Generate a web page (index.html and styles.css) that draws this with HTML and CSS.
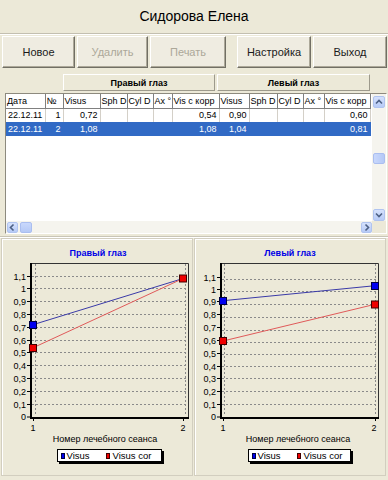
FILE: index.html
```html
<!DOCTYPE html>
<html>
<head>
<meta charset="utf-8">
<link rel="stylesheet" href="styles.css">
</head>
<body>
<div class="title">Сидорова Елена</div>
<div class="toolbar">
  <div class="btn w73">Новое</div>
  <div class="btn w71 dis">Удалить</div>
  <div class="btn w76 dis sep">Печать</div>
  <div class="btn w74">Настройка</div>
  <div class="btn w74">Выход</div>
</div>
<div class="groups">
  <div class="grp g1">Правый глаз</div>
  <div class="grp g2">Левый глаз</div>
</div>
<div class="grid">
  <div class="grid-main">
    <div class="cells">
      <table class="tbl">
        <colgroup>
          <col class="c39"><col class="c18"><col class="c37"><col class="c27"><col class="c26"><col class="c19"><col class="c47">
          <col class="c30"><col class="c28"><col class="c26"><col class="c21"><col class="c46">
        </colgroup>
        <thead>
          <tr><th>Дата</th><th>№</th><th>Visus</th><th>Sph D</th><th>Cyl D</th><th>Ax °</th><th>Vis с корр</th><th>Visus</th><th>Sph D</th><th>Cyl D</th><th>Ax °</th><th>Vis с корр</th></tr>
        </thead>
        <tbody>
          <tr><td>22.12.11</td><td class="r">1</td><td class="r">0,72</td><td></td><td></td><td></td><td class="r">0,54</td><td class="r">0,90</td><td></td><td></td><td></td><td class="r">0,60</td></tr>
          <tr class="sel"><td>22.12.11</td><td class="r">2</td><td class="r">1,08</td><td></td><td></td><td></td><td class="r">1,08</td><td class="r">1,04</td><td></td><td></td><td></td><td class="r">0,81</td></tr>
        </tbody>
      </table>
    </div>
    <div class="vscroll">
      <div class="sbtn"><svg width="12" height="12" viewBox="0 0 12 12"><path d="M3 7.5 L6 4.5 L9 7.5" class="chev"/></svg></div>
      <div class="vtrack"><div class="vthumb"></div></div>
      <div class="sbtn"><svg width="12" height="12" viewBox="0 0 12 12"><path d="M3 4.5 L6 7.5 L9 4.5" class="chev"/></svg></div>
    </div>
  </div>
  <div class="hrow">
    <div class="hscroll">
      <div class="sbtn"><svg width="11" height="11" viewBox="0 0 11 11"><path d="M6.5 2.5 L3.5 5.5 L6.5 8.5" class="chev"/></svg></div>
      <div class="hthumb"></div>
      <div class="htrack"></div>
      <div class="sbtn"><svg width="11" height="11" viewBox="0 0 11 11"><path d="M4.5 2.5 L7.5 5.5 L4.5 8.5" class="chev"/></svg></div>
    </div>
    <div class="corner"></div>
  </div>
</div>
<div class="sepline"></div>
<div class="charts">
  <div class="panel">
    <svg width="190" height="236" viewBox="0 0 190 236">
      <text x="96" y="17" class="ct">Правый глаз</text>
      <g class="grd">
        <line x1="30" y1="165.5" x2="186" y2="165.5"/><line x1="30" y1="152.5" x2="186" y2="152.5"/>
        <line x1="30" y1="139.5" x2="186" y2="139.5"/><line x1="30" y1="126.5" x2="186" y2="126.5"/>
        <line x1="30" y1="113.5" x2="186" y2="113.5"/><line x1="30" y1="101.5" x2="186" y2="101.5"/>
        <line x1="30" y1="88.5" x2="186" y2="88.5"/><line x1="30" y1="75.5" x2="186" y2="75.5"/>
        <line x1="30" y1="62.5" x2="186" y2="62.5"/><line x1="30" y1="49.5" x2="186" y2="49.5"/>
        <line x1="30" y1="37.5" x2="186" y2="37.5"/>
        <line x1="33.5" y1="25" x2="33.5" y2="177"/><line x1="183.5" y1="25" x2="183.5" y2="177"/>
      </g>
      <g class="tick">
        <line x1="25" y1="178" x2="28" y2="178"/><line x1="25" y1="165.5" x2="28" y2="165.5"/><line x1="25" y1="152.5" x2="28" y2="152.5"/>
        <line x1="25" y1="139.5" x2="28" y2="139.5"/><line x1="25" y1="126.5" x2="28" y2="126.5"/><line x1="25" y1="113.5" x2="28" y2="113.5"/>
        <line x1="25" y1="101.5" x2="28" y2="101.5"/><line x1="25" y1="88.5" x2="28" y2="88.5"/><line x1="25" y1="75.5" x2="28" y2="75.5"/>
        <line x1="25" y1="62.5" x2="28" y2="62.5"/><line x1="25" y1="49.5" x2="28" y2="49.5"/><line x1="25" y1="37.5" x2="28" y2="37.5"/>
        <line x1="31.5" y1="179" x2="31.5" y2="182"/><line x1="181.5" y1="179" x2="181.5" y2="182"/>
      </g>
      <path d="M28.5 24.5 H186.5 V178.5" class="box"/>
      <path d="M29 24 V179 H187" class="axis"/>
      <g class="yl">
        <text x="24" y="181">0</text><text x="24" y="168.5">0,1</text><text x="24" y="155.5">0,2</text>
        <text x="24" y="142.5">0,3</text><text x="24" y="129.5">0,4</text><text x="24" y="116.5">0,5</text>
        <text x="24" y="104.5">0,6</text><text x="24" y="91.5">0,7</text><text x="24" y="78.5">0,8</text>
        <text x="24" y="65.5">0,9</text><text x="24" y="52.5">1</text><text x="24" y="40.5">1,1</text>
      </g>
      <text x="31" y="192" class="xl">1</text>
      <text x="181" y="192" class="xl">2</text>
      <text x="103" y="203" class="xl">Номер лечебного сеанса</text>
      <line x1="31" y1="85.7" x2="181" y2="39.5" class="lb"/>
      <line x1="31" y1="108.8" x2="181" y2="39.5" class="lr"/>
      <rect x="27.5" y="82.5" width="7" height="7" class="mb"/>
      <rect x="27.5" y="105.5" width="7" height="7" class="mr"/>
      <rect x="177.5" y="36" width="7" height="7" class="mr"/>
      <rect x="57" y="212" width="105" height="13" fill="#000"/>
      <rect x="55.5" y="210.5" width="104" height="12" class="lg"/>
      <rect x="59.5" y="214.5" width="3" height="5" class="mb"/>
      <text x="64.5" y="220" class="lt">Visus</text>
      <rect x="104.5" y="214.5" width="3" height="5" class="mr"/>
      <text x="110.5" y="220" class="lt">Visus cor</text>
    </svg>
  </div>
  <div class="panel">
    <svg width="190" height="236" viewBox="0 0 190 236">
      <text x="95" y="17" class="ct">Левый глаз</text>
      <g class="grd">
        <line x1="27" y1="165.5" x2="183" y2="165.5"/><line x1="27" y1="152.5" x2="183" y2="152.5"/>
        <line x1="27" y1="139.5" x2="183" y2="139.5"/><line x1="27" y1="127.5" x2="183" y2="127.5"/>
        <line x1="27" y1="115.5" x2="183" y2="115.5"/><line x1="27" y1="103.5" x2="183" y2="103.5"/>
        <line x1="27" y1="91.5" x2="183" y2="91.5"/><line x1="27" y1="78.5" x2="183" y2="78.5"/>
        <line x1="27" y1="65.5" x2="183" y2="65.5"/><line x1="27" y1="52.5" x2="183" y2="52.5"/>
        <line x1="27" y1="40.5" x2="183" y2="40.5"/>
        <line x1="29.5" y1="25" x2="29.5" y2="177"/><line x1="180.5" y1="25" x2="180.5" y2="177"/>
      </g>
      <g class="tick">
        <line x1="22" y1="178" x2="25" y2="178"/><line x1="22" y1="165.5" x2="25" y2="165.5"/><line x1="22" y1="152.5" x2="25" y2="152.5"/>
        <line x1="22" y1="139.5" x2="25" y2="139.5"/><line x1="22" y1="127.5" x2="25" y2="127.5"/><line x1="22" y1="114.5" x2="25" y2="114.5"/>
        <line x1="22" y1="101.5" x2="25" y2="101.5"/><line x1="22" y1="88.5" x2="25" y2="88.5"/><line x1="22" y1="75.5" x2="25" y2="75.5"/>
        <line x1="22" y1="62.5" x2="25" y2="62.5"/><line x1="22" y1="50.5" x2="25" y2="50.5"/><line x1="22" y1="38.5" x2="25" y2="38.5"/>
        <line x1="28.5" y1="179" x2="28.5" y2="182"/><line x1="180.5" y1="179" x2="180.5" y2="182"/>
      </g>
      <path d="M25.5 24.5 H183.5 V178.5" class="box"/>
      <path d="M26 24 V179 H184" class="axis"/>
      <g class="yl">
        <text x="21" y="181">0</text><text x="21" y="168.5">0,1</text><text x="21" y="155.5">0,2</text>
        <text x="21" y="142.5">0,3</text><text x="21" y="130.5">0,4</text><text x="21" y="117.5">0,5</text>
        <text x="21" y="104.5">0,6</text><text x="21" y="91.5">0,7</text><text x="21" y="78.5">0,8</text>
        <text x="21" y="65.5">0,9</text><text x="21" y="53.5">1</text><text x="21" y="41.5">1,1</text>
      </g>
      <text x="28" y="192" class="xl">1</text>
      <text x="179" y="192" class="xl">2</text>
      <text x="103" y="203" class="xl">Номер лечебного сеанса</text>
      <line x1="28" y1="61.7" x2="180" y2="46.7" class="lb"/>
      <line x1="28" y1="102" x2="180" y2="65.3" class="lr"/>
      <rect x="24.5" y="58.5" width="7" height="7" class="mb"/>
      <rect x="176.5" y="43.5" width="7" height="7" class="mb"/>
      <rect x="24.5" y="98.5" width="7" height="7" class="mr"/>
      <rect x="176.5" y="62" width="7" height="7" class="mr"/>
      <rect x="55" y="212" width="103" height="13" fill="#000"/>
      <rect x="53.5" y="210.5" width="102" height="12" class="lg"/>
      <rect x="57.5" y="214.5" width="3" height="5" class="mb"/>
      <text x="62.5" y="220" class="lt">Visus</text>
      <rect x="102.5" y="214.5" width="3" height="5" class="mr"/>
      <text x="108.5" y="220" class="lt">Visus cor</text>
    </svg>
  </div>
</div>
</body>
</html>
```
FILE: styles.css
```css
* { box-sizing: border-box; }
html, body { margin: 0; padding: 0; }
body {
  width: 388px;
  height: 480px;
  overflow: hidden;
  background: #ece9d8;
  font-family: "Liberation Sans", Arial, sans-serif;
  color: #000;
}
.title {
  height: 34px;
  display: flex;
  align-items: center;
  justify-content: center;
  font-size: 14px;
  border-bottom: 1px solid #c3bfb0;
  box-shadow: 0 1px 0 #fff;
  padding-bottom: 1px;
}
.toolbar {
  display: flex;
  gap: 2px;
  padding: 2px 0 0 2px;
}
.btn {
  height: 32px;
  display: flex;
  align-items: center;
  justify-content: center;
  font-size: 11px;
  color: #1a1a1a;
  background: #efece1;
  border: 1px solid;
  border-color: #fff #716f64 #716f64 #fff;
  box-shadow: inset -1px -1px 0 #aca899;
}
.w73 { width: 73px; }
.w71 { width: 71px; }
.w76 { width: 76px; }
.w74 { width: 74px; }
.sep { margin-right: 9px; }
.btn.dis { color: #aca899; }
.groups {
  display: flex;
  gap: 2px;
  margin-top: 6px;
  padding-left: 63px;
}
.grp {
  height: 17px;
  display: flex;
  align-items: center;
  justify-content: center;
  font-size: 9px;
  font-weight: bold;
  background: #ece9d8;
  border: 1px solid;
  border-color: #fff #9d9a8c #9d9a8c #fff;
}
.g1 { width: 152px; }
.g2 { width: 153px; }
.grid {
  margin: 2px 0 0 5px;
  width: 382px;
  border: 1px solid #8d8a7e;
  border-right-color: #fff;
  border-bottom-color: #fff;
}
.grid-main {
  display: flex;
  height: 127px;
}
.cells {
  width: 366px;
  background: #fff;
  overflow: hidden;
}
.tbl {
  border-collapse: collapse;
  table-layout: fixed;
  width: 364px;
  font-size: 9px;
}
.c39 { width: 39px; } .c18 { width: 18px; } .c37 { width: 37px; } .c27 { width: 27px; }
.c26 { width: 26px; } .c19 { width: 19px; } .c47 { width: 47px; } .c30 { width: 30px; }
.c28 { width: 28px; } .c21 { width: 21px; } .c46 { width: 46px; }
.tbl th {
  height: 14px;
  padding: 0 0 0 1px;
  font-weight: normal;
  text-align: left;
  white-space: nowrap;
  overflow: hidden;
  border-right: 1px solid #808080;
  border-bottom: 1px solid #808080;
}
.tbl td {
  height: 14px;
  padding: 0 2px;
  white-space: nowrap;
  overflow: hidden;
  border-right: 1px solid #d4d0c8;
}
.tbl td.r { text-align: right; }
.tbl tr.sel td {
  background: #316ac5;
  color: #fff;
  border-right-color: #316ac5;
}
.vscroll {
  width: 14px;
  display: flex;
  flex-direction: column;
  background: #f5f4ee;
  padding: 2px 1px 0 1px;
}
.sbtn {
  width: 12px;
  height: 12px;
  flex: none;
  background: linear-gradient(#d5e1fc, #b7cbf7);
  border: 1px solid #b0c4f0;
  border-radius: 2px;
  display: flex;
  align-items: center;
  justify-content: center;
}
.sbtn svg { display: block; flex: none; }
.chev { fill: none; stroke: #4d6185; stroke-width: 1.6; }
.vtrack { flex: 1; }
.vthumb {
  margin-top: 45px;
  height: 11px;
  background: linear-gradient(90deg, #c9d8fc, #b5c9f6);
  border: 1px solid #aabef0;
  border-radius: 2px;
}
.hrow {
  display: flex;
  height: 12px;
}
.hscroll {
  width: 366px;
  display: flex;
  align-items: center;
  background: #f5f4ee;
  padding-left: 1px;
}
.hscroll .sbtn { width: 11px; height: 11px; }
.hthumb {
  width: 12px;
  height: 11px;
  margin-left: 2px;
  background: linear-gradient(#c9d8fc, #b5c9f6);
  border: 1px solid #aabef0;
  border-radius: 2px;
}
.htrack { flex: 1; }
.corner { width: 14px; background: #ece9d8; }
.sepline {
  margin-top: 2px;
  height: 1px;
  background: #c9c5b6;
  box-shadow: 0 1px 0 #fff;
}
.charts {
  display: grid;
  grid-template-columns: 192px 192px;
  column-gap: 1px;
  padding: 1px 2px 0 1px;
}
.panel {
  height: 238px;
  border: 1px solid #d2cebf;
  box-shadow: inset 1px 1px 0 #fff;
}
.panel svg { display: block; }
.ct {
  font-family: "Liberation Sans", Arial, sans-serif;
  font-size: 9px;
  font-weight: bold;
  fill: #0000e6;
  text-anchor: middle;
}
.grd line { stroke: #8a8a8a; stroke-width: 1; stroke-dasharray: 2 2; }
.tick line { stroke: #000; stroke-width: 1; }
.box { fill: none; stroke: #333; stroke-width: 1; }
.axis { fill: none; stroke: #000; stroke-width: 2; }
.yl text {
  font-family: "Liberation Sans", Arial, sans-serif;
  font-size: 9px;
  text-anchor: end;
  fill: #000;
}
.xl {
  font-family: "Liberation Sans", Arial, sans-serif;
  font-size: 9px;
  text-anchor: middle;
  fill: #000;
}
.lb { stroke: #3a3aa8; stroke-width: 1; }
.lr { stroke: #e05a5a; stroke-width: 1; }
.mb { fill: #0000f0; stroke: #000040; stroke-width: 1; }
.mr { fill: #f00000; stroke: #400000; stroke-width: 1; }
.lg { fill: #fff; stroke: #000; stroke-width: 1; }
.lt {
  font-family: "Liberation Sans", Arial, sans-serif;
  font-size: 9.5px;
  fill: #000;
}
```
